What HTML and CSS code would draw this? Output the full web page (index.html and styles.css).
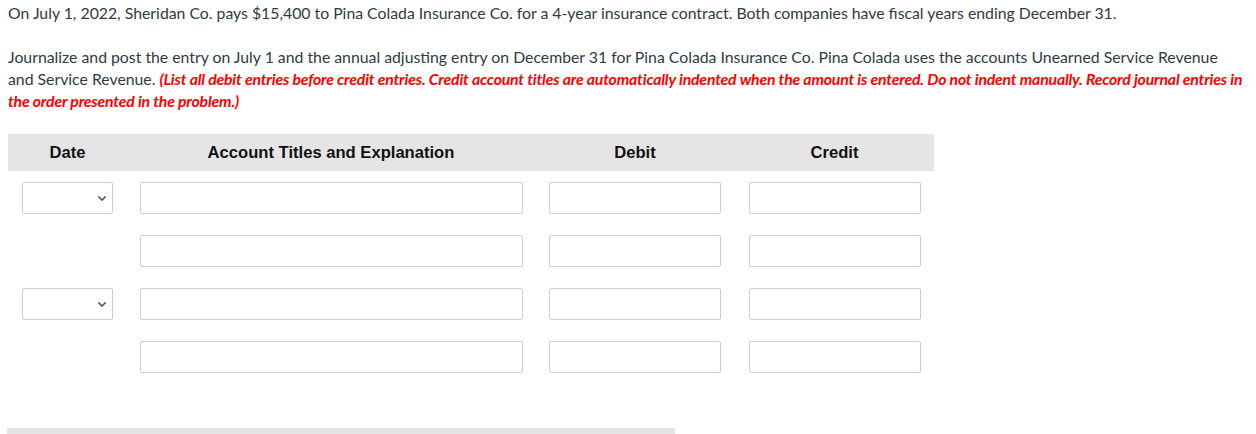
FILE: index.html
```html
<!DOCTYPE html>
<html lang="en">
<head>
<meta charset="utf-8">
<title>Journal entry</title>
<link rel="stylesheet" href="styles.css">
</head>
<body>
<div class="page">
  <p class="para">On July 1, 2022, Sheridan Co. pays $15,400 to Pina Colada Insurance Co. for a 4-year insurance contract. Both companies have fiscal years ending December 31.</p>
  <p class="para">Journalize and post the entry on July 1 and the annual adjusting entry on December 31 for Pina Colada Insurance Co. Pina Colada uses the accounts Unearned Service Revenue and Service Revenue. <em class="note">(List all debit entries before credit entries. Credit account titles are automatically indented when the amount is entered. Do not indent manually. Record journal entries in the order presented in the problem.)</em></p>

  <div class="journal">
    <div class="head">
      <div class="hcell">Date</div>
      <div class="hcell">Account Titles and Explanation</div>
      <div class="hcell">Debit</div>
      <div class="hcell">Credit</div>
    </div>
    <div class="row">
      <div class="cell"><div class="select"><svg class="chev" width="8" height="5" viewBox="0 0 8 5"><path d="M0.5 0.5 L4 4 L7.5 0.5" fill="none" stroke="#555" stroke-width="1.6"/></svg></div></div>
      <div class="cell"><div class="field acct"></div></div>
      <div class="cell"><div class="field amt"></div></div>
      <div class="cell"><div class="field amt"></div></div>
    </div>
    <div class="row">
      <div class="cell"></div>
      <div class="cell"><div class="field acct"></div></div>
      <div class="cell"><div class="field amt"></div></div>
      <div class="cell"><div class="field amt"></div></div>
    </div>
    <div class="row">
      <div class="cell"><div class="select"><svg class="chev" width="8" height="5" viewBox="0 0 8 5"><path d="M0.5 0.5 L4 4 L7.5 0.5" fill="none" stroke="#555" stroke-width="1.6"/></svg></div></div>
      <div class="cell"><div class="field acct"></div></div>
      <div class="cell"><div class="field amt"></div></div>
      <div class="cell"><div class="field amt"></div></div>
    </div>
    <div class="row">
      <div class="cell"></div>
      <div class="cell"><div class="field acct"></div></div>
      <div class="cell"><div class="field amt"></div></div>
      <div class="cell"><div class="field amt"></div></div>
    </div>
  </div>
  <div class="scrollbar"></div>
</div>
</body>
</html>
```

FILE: styles.css
```css
* { box-sizing: border-box; }
html, body { margin: 0; padding: 0; background: #fff; }
body {
  font-family: Lato, "Open Sans", sans-serif;
  font-size: 15.8px;
  color: #2d3b45;
  overflow: hidden;
}
.page {
  padding: 2px 11px 0 8px;
}
.para {
  margin: 0 0 22px 0;
  line-height: 22px;
}
.note {
  color: #ff0000;
  font-weight: 700;
  font-style: italic;
  letter-spacing: -0.18px;
}
.journal {
  display: flex;
  flex-direction: column;
  gap: 21px;
  width: 926px;
}
.head {
  display: grid;
  grid-template-columns: 119px 408px 200px 199px;
  height: 37px;
  background: #e5e5e5;
  align-items: center;
  margin-bottom: -10px;
}
.hcell {
  text-align: center;
  font-family: "Liberation Sans", Arial, sans-serif;
  font-weight: 700;
  font-size: 16.6px;
  color: #111;
  padding-top: 1px;
}
.row {
  display: grid;
  grid-template-columns: 119px 408px 200px 199px;
  height: 32px;
}
.cell {
  display: flex;
  justify-content: center;
}
.field, .select {
  height: 32px;
  border: 1px solid #cfcfcf;
  border-radius: 2px;
  background: #fff;
}
.select {
  width: 91px;
  display: flex;
  align-items: center;
  justify-content: flex-end;
  padding-right: 6px;
}
.chev { display: block; }
.acct { width: 383px; }
.amt { width: 172px; }
.scrollbar {
  margin-top: 55px;
  margin-left: -1px;
  width: 668px;
  height: 8px;
  background: #e4e4e4;
}
```
